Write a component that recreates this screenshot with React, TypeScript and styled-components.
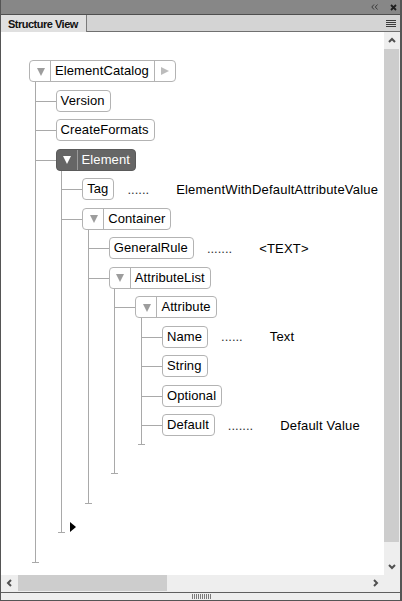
import React from "react";
import styled, { createGlobalStyle, css } from "styled-components";

const GlobalStyle = createGlobalStyle`
  html, body { margin: 0; padding: 0; background: #ffffff; }
  #root { width: 402px; height: 601px; }
`;

const Panel = styled.div`
  width: 402px;
  height: 601px;
  box-sizing: border-box;
  border-left: 1px solid #555555;
  border-right: 2px solid #555555;
  border-bottom: 1px solid #555555;
  display: flex;
  flex-direction: column;
  background: #eeeeee;
  font-family: "Liberation Sans", Arial, sans-serif;
  overflow: hidden;
`;

const TitleBar = styled.div`
  height: 14px;
  flex: none;
  border-bottom: 1px solid #4f4f4f;
  background: #878787;
  display: flex;
  justify-content: flex-end;
  align-items: center;
  gap: 12px;
  padding-right: 3px;
`;

const TabRow = styled.div`
  height: 16px;
  flex: none;
  background: #d4d4d4;
  border-bottom: 1px solid #707070;
  display: flex;
  align-items: stretch;
`;

const Tab = styled.div`
  width: 78px;
  height: 17px;
  margin-bottom: -1px;
  padding-left: 7px;
  background: #e0e0e0;
  border-right: 1px solid #7a7a7a;
  font-size: 11px;
  font-weight: bold;
  letter-spacing: -0.5px;
  color: #111111;
  display: flex;
  align-items: center;
  white-space: nowrap;
`;

const MenuIcon = styled.span`
  margin-left: auto;
  margin-right: 4px;
  align-self: center;
  width: 10px;
  height: 7px;
  margin-top: 1px;
  background: repeating-linear-gradient(to bottom, #3c3c3c 0 1px, transparent 1px 2px);
`;

const Body = styled.div`
  height: 543px;
  flex: none;
  display: flex;
`;

const Content = styled.div`
  width: 383px;
  flex: none;
  background: #ffffff;
  overflow: hidden;
  position: relative;
`;

const VScroll = styled.div`
  width: 16px;
  flex: none;
  box-sizing: border-box;
  padding-right: 1px;
  display: flex;
  flex-direction: column;
  background: #eeeeee;
`;

const ArrowButton = styled.div<{ $w?: number; $h?: number }>`
  width: ${(p) => (p.$w ? `${p.$w}px` : "100%")};
  height: ${(p) => (p.$h ? `${p.$h}px` : "100%")};
  flex: none;
  display: flex;
  align-items: center;
  justify-content: center;
`;

const VThumb = styled.div`
  height: 493px;
  flex: none;
  background: #cdcdcd;
`;

const Spacer = styled.div`
  flex: 1;
`;

const HScrollRow = styled.div`
  height: 16px;
  flex: none;
  display: flex;
  background: #eeeeee;
`;

const HTrack = styled.div`
  width: 383px;
  flex: none;
  display: flex;
  align-items: stretch;
`;

const HThumb = styled.div`
  width: 149px;
  flex: none;
  background: #cdcdcd;
`;

const GripBar = styled.div`
  margin-top: 1px;
  height: 7px;
  flex: none;
  border-top: 1px solid #5f5f5f;
  display: flex;
  justify-content: center;
  align-items: center;
  padding-left: 2px;
`;

const Grip = styled.span`
  width: 20px;
  height: 5px;
  background: repeating-linear-gradient(to right, #7a7a7a 0 1px, transparent 1px 2px);
`;

/* ---------- tree ---------- */

const LINE = "#a9a9a9";

const Canvas = styled.div`
  position: relative;
  padding: 24.25px 0 0 28px;
`;

const Item = styled.div``;

const Row = styled.div<{ $nested?: boolean }>`
  position: relative;
  height: 29.5px;
  display: flex;
  align-items: center;
  white-space: nowrap;
  ${(p) =>
    p.$nested &&
    css`
      &::before {
        content: "";
        position: absolute;
        left: -21.1px;
        width: 21.1px;
        top: 14.75px;
        height: 1px;
        background: ${LINE};
      }
    `}
`;

const Children = styled.div`
  position: relative;
  margin-left: 5.5px;
  padding-left: 21.1px;
  padding-bottom: 29.5px;
  &::before {
    content: "";
    position: absolute;
    left: 0;
    top: -3.75px;
    bottom: 24.5px;
    width: 1px;
    background: ${LINE};
  }
  &::after {
    content: "";
    position: absolute;
    left: -3px;
    width: 7px;
    bottom: 24.5px;
    height: 1px;
    background: ${LINE};
  }
`;

const NodeBox = styled.div<{ $selected?: boolean }>`
  box-sizing: border-box;
  height: 22px;
  display: flex;
  align-items: stretch;
  border: 1px solid ${(p) => (p.$selected ? "#5a5a5a" : "#b3b3b3")};
  border-radius: 4px;
  background: ${(p) => (p.$selected ? "#666666" : "#ffffff")};
  color: ${(p) => (p.$selected ? "#ffffff" : "#000000")};
  font-size: 13px;
  letter-spacing: 0.1px;
`;

const ToggleCell = styled.div<{ $selected?: boolean }>`
  width: 21px;
  box-sizing: border-box;
  border-right: 1px solid ${(p) => (p.$selected ? "#9a9a9a" : "#b3b3b3")};
  display: flex;
  align-items: center;
  justify-content: center;
  padding-left: 1px;
`;

const DownTriangle = styled.span<{ $selected?: boolean }>`
  width: 0;
  height: 0;
  margin-top: 1px;
  border-left: 4px solid transparent;
  border-right: 4px solid transparent;
  border-top: 8px solid ${(p) => (p.$selected ? "#ffffff" : "#9d9d9d")};
`;

const MoreCell = styled.div`
  width: 21px;
  box-sizing: border-box;
  border-left: 1px solid #b3b3b3;
  display: flex;
  align-items: center;
  justify-content: center;
`;

const RightTriangle = styled.span`
  width: 0;
  height: 0;
  border-top: 4px solid transparent;
  border-bottom: 4px solid transparent;
  border-left: 8px solid #bcbcbc;
`;

const NodeLabel = styled.span`
  padding: 0 5px 0 4px;
  line-height: 20px;
`;

const Note = styled.div`
  display: flex;
  align-items: baseline;
  margin-left: 13px;
  font-size: 13px;
  color: #000000;
`;

const Dots = styled.span`
  color: #333333;
`;

const NoteText = styled.span`
  margin-left: 27px;
  letter-spacing: 0.2px;
`;

const Marker = styled.span`
  position: absolute;
  left: 69px;
  top: 490px;
  width: 0;
  height: 0;
  border-top: 5px solid transparent;
  border-bottom: 5px solid transparent;
  border-left: 6px solid #000000;
`;

interface TreeNode {
  label: string;
  more?: boolean;
  selected?: boolean;
  note?: string;
  dots?: number;
  children?: TreeNode[];
}

const tree: TreeNode = {
  label: "ElementCatalog",
  more: true,
  children: [
    { label: "Version" },
    { label: "CreateFormats" },
    {
      label: "Element",
      selected: true,
      children: [
        { label: "Tag", note: "ElementWithDefaultAttributeValue", dots: 6 },
        {
          label: "Container",
          children: [
            { label: "GeneralRule", note: "<TEXT>", dots: 7 },
            {
              label: "AttributeList",
              children: [
                {
                  label: "Attribute",
                  children: [
                    { label: "Name", note: "Text", dots: 6 },
                    { label: "String" },
                    { label: "Optional" },
                    { label: "Default", note: "Default Value", dots: 7 },
                  ],
                },
              ],
            },
          ],
        },
      ],
    },
  ],
};

function TreeItem({ node, nested }: { node: TreeNode; nested?: boolean }) {
  return (
    <Item>
      <Row $nested={nested}>
        <NodeBox $selected={node.selected}>
          {node.children && (
            <ToggleCell $selected={node.selected}>
              <DownTriangle $selected={node.selected} />
            </ToggleCell>
          )}
          <NodeLabel>{node.label}</NodeLabel>
          {node.more && (
            <MoreCell>
              <RightTriangle />
            </MoreCell>
          )}
        </NodeBox>
        {node.note && (
          <Note>
            <Dots>{".".repeat(node.dots ?? 6)}</Dots>
            <NoteText>{node.note}</NoteText>
          </Note>
        )}
      </Row>
      {node.children && (
        <Children>
          {node.children.map((c) => (
            <TreeItem key={c.label} node={c} nested />
          ))}
        </Children>
      )}
    </Item>
  );
}

/* ---------- icons ---------- */

const Chevron = ({ dir }: { dir: "up" | "down" | "left" | "right" }) => {
  const paths: Record<string, string> = {
    up: "M1 5 L4 2 L7 5",
    down: "M1 2 L4 5 L7 2",
    left: "M5 1 L2 4 L5 7",
    right: "M2 1 L5 4 L2 7",
  };
  return (
    <svg width="8" height="8" viewBox="0 0 8 8">
      <path d={paths[dir]} fill="none" stroke="#505050" strokeWidth="2" />
    </svg>
  );
};

const CollapseIcon = () => (
  <svg width="7" height="6" viewBox="0 0 7 6">
    <path d="M3 0.5 L0.8 3 L3 5.5 M6.5 0.5 L4.3 3 L6.5 5.5" fill="none" stroke="#3a3a3a" strokeWidth="1" />
  </svg>
);

const CloseIcon = () => (
  <svg width="7" height="7" viewBox="0 0 7 7">
    <path d="M1 1 L6 6 M6 1 L1 6" fill="none" stroke="#1e1e1e" strokeWidth="1.8" />
  </svg>
);

export default function App() {
  return (
    <>
      <GlobalStyle />
      <Panel>
        <TitleBar>
          <CollapseIcon />
          <CloseIcon />
        </TitleBar>
        <TabRow>
          <Tab>Structure View</Tab>
          <MenuIcon />
        </TabRow>
        <Body>
          <Content>
            <Canvas>
              <TreeItem node={tree} />
              <Marker />
            </Canvas>
          </Content>
          <VScroll>
            <ArrowButton $h={17}>
              <Chevron dir="up" />
            </ArrowButton>
            <VThumb />
            <Spacer />
            <ArrowButton $h={17}>
              <Chevron dir="down" />
            </ArrowButton>
          </VScroll>
        </Body>
        <HScrollRow>
          <HTrack>
            <ArrowButton $w={17}>
              <Chevron dir="left" />
            </ArrowButton>
            <HThumb />
            <Spacer />
            <ArrowButton $w={17}>
              <Chevron dir="right" />
            </ArrowButton>
          </HTrack>
        </HScrollRow>
        <GripBar>
          <Grip />
        </GripBar>
      </Panel>
    </>
  );
}
